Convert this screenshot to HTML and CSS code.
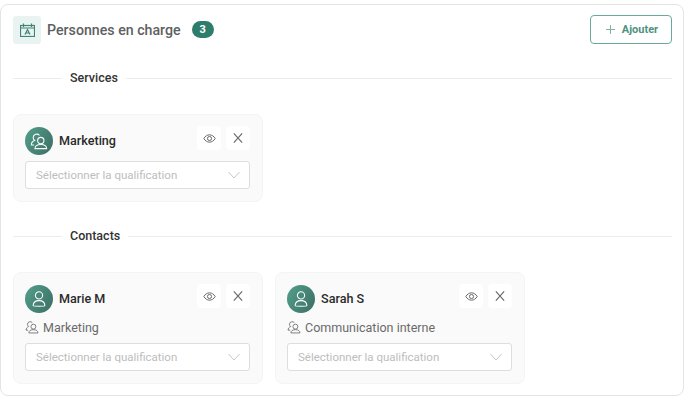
FILE: index.html
```html
<!DOCTYPE html>
<html lang="fr">
<head>
<meta charset="UTF-8">
<meta name="viewport" content="width=device-width, initial-scale=1.0">
<title>Personnes en charge</title>
<link rel="stylesheet" href="styles.css">
</head>
<body>

<svg class="sprites" width="0" height="0" aria-hidden="true">
  <symbol id="i-eye" viewBox="0 0 16 16">
    <path d="M1 8C2.800 5 5.200 3.500 8 3.500S13.200 5 15 8C13.200 11 10.800 12.500 8 12.500S2.800 11 1 8Z"/>
    <circle cx="8" cy="8" r="2.500"/>
  </symbol>
  <symbol id="i-close" viewBox="0 0 13 13">
    <path d="M2 1.500 11 11.500M11 1.500 2 11.500"/>
  </symbol>
  <symbol id="i-chevron" viewBox="0 0 12 12">
    <path d="M0.500 3 6 9 11.500 3"/>
  </symbol>
  <symbol id="i-user" viewBox="0 0 20 20">
    <circle cx="10" cy="6" r="4"/>
    <path d="M3.500 17.500C3.500 13.500 6 11.800 10 11.800S16.500 13.500 16.500 17.500C16.500 18 3.500 18 3.500 17.500Z"/>
  </symbol>
  <symbol id="i-group" viewBox="0 0 20 20">
    <circle cx="12" cy="9.500" r="3.500"/>
    <path d="M5.500 18.500C5.500 15.500 8 13.800 12 13.800S18.500 15.500 18.500 18.500Z"/>
    <path d="M10.500 3.800A4 4 0 0 0 3.500 6C3.500 7.500 4.200 8.600 5.300 9.300C3 10.200 1.500 12 1.500 14.500H4.500"/>
  </symbol>
</svg>

<div class="panel">
  <div class="panel-head">
    <span class="head-icon">
      <svg width="15" height="14" viewBox="0 0 15 14">
        <rect x="0.500" y="2.500" width="14" height="11"/>
        <path d="M3.500 0.500V4M11.500 0.500V4M0.500 5H14.500"/>
        <path d="M5 11.500 7.500 6.500 10 11.500M6 10H9"/>
      </svg>
    </span>
    <h1>Personnes en charge</h1>
    <span class="badge">3</span>
    <button class="add-btn" type="button">
      <svg width="9" height="9" viewBox="0 0 9 9"><path d="M4.500 0V9M0 4.500H9"/></svg>
      Ajouter
    </button>
  </div>

  <div class="section-title"><span>Services</span></div>
  <div class="cards">
    <div class="card">
      <div class="card-top">
        <span class="avatar"><svg width="18" height="18"><use href="#i-group"/></svg></span>
        <span class="name">Marketing</span>
        <span class="icon-btn eye"><svg width="13" height="13"><use href="#i-eye"/></svg></span>
        <span class="icon-btn close"><svg width="12" height="12"><use href="#i-close"/></svg></span>
      </div>
      <div class="select">Sélectionner la qualification<svg width="12" height="12"><use href="#i-chevron"/></svg></div>
    </div>
  </div>

  <div class="section-title"><span>Contacts</span></div>
  <div class="cards">
    <div class="card">
      <div class="card-top">
        <span class="avatar"><svg width="18" height="18"><use href="#i-user"/></svg></span>
        <span class="name">Marie M</span>
        <span class="icon-btn eye"><svg width="13" height="13"><use href="#i-eye"/></svg></span>
        <span class="icon-btn close"><svg width="12" height="12"><use href="#i-close"/></svg></span>
      </div>
      <div class="service"><svg width="14" height="14"><use href="#i-group"/></svg>Marketing</div>
      <div class="select">Sélectionner la qualification<svg width="12" height="12"><use href="#i-chevron"/></svg></div>
    </div>
    <div class="card">
      <div class="card-top">
        <span class="avatar"><svg width="18" height="18"><use href="#i-user"/></svg></span>
        <span class="name">Sarah S</span>
        <span class="icon-btn eye"><svg width="13" height="13"><use href="#i-eye"/></svg></span>
        <span class="icon-btn close"><svg width="12" height="12"><use href="#i-close"/></svg></span>
      </div>
      <div class="service"><svg width="14" height="14"><use href="#i-group"/></svg>Communication interne</div>
      <div class="select">Sélectionner la qualification<svg width="12" height="12"><use href="#i-chevron"/></svg></div>
    </div>
  </div>
</div>

</body>
</html>
```

FILE: styles.css
```css
* {
  box-sizing: border-box;
  font-family: 'Roboto', sans-serif;
}

body {
  margin: 0;
  background: #fff;
}

.sprites {
  position: absolute;
}

svg {
  fill: none;
  stroke: currentColor;
  stroke-width: 1.2;
  flex-shrink: 0;
}

.panel {
  width: 684px;
  height: 392px;
  margin: 4px 0 0 0;
  padding: 10px 11px 0 12px;
  background: #fff;
  border: 1px solid #e4e4e4;
  border-radius: 8px;
}

.panel-head {
  display: flex;
  align-items: center;
  height: 29px;
}

.head-icon {
  width: 28px;
  height: 28px;
  display: flex;
  align-items: center;
  justify-content: center;
  background: #e9f3f1;
  border-radius: 3px;
  color: #3f8474;
}

h1 {
  margin: 0 0 0 6px;
  font-size: 14.2px;
  font-weight: 500;
  color: #5f5f5f;
}

.badge {
  margin-left: 11px;
  width: 22px;
  height: 17px;
  border-radius: 9px;
  background: #2e7c6b;
  color: #fff;
  font-size: 11px;
  font-weight: 700;
  line-height: 17px;
  text-align: center;
}

.add-btn {
  margin-left: auto;
  width: 82px;
  height: 29px;
  padding: 0 0 0 2px;
  display: flex;
  align-items: center;
  justify-content: center;
  gap: 7px;
  background: #fff;
  border: 1px solid #6aaa9d;
  border-radius: 4px;
  color: #4f9182;
  font-size: 11px;
  font-weight: 700;
}

.add-btn svg {
  stroke: #7db5a9;
  stroke-width: 1;
}

.section-title {
  display: flex;
  align-items: center;
  height: 16px;
  margin-top: 26px;
  font-size: 12.5px;
  font-weight: 500;
  color: #333;
}

.section-title::before {
  content: "";
  width: 49px;
  border-top: 1px solid #ececec;
}

.section-title::after {
  content: "";
  flex: 1;
  border-top: 1px solid #ececec;
}

.section-title span {
  padding: 0 8px 2px;
}

.cards {
  display: flex;
  gap: 12px;
  margin-top: 28px;
}

.card {
  width: 250px;
  padding: 12px;
  background: #fafafa;
  border: 1px solid #f4f4f4;
  border-radius: 8px;
}

.card-top {
  display: flex;
  align-items: center;
  height: 29px;
  margin: -1px 0 0 -1px;
}

.avatar {
  width: 28px;
  height: 28px;
  display: flex;
  align-items: center;
  justify-content: center;
  border-radius: 50%;
  background: linear-gradient(120deg, #52a08b, #3d6d64);
  color: #fff;
}

.name {
  margin-left: 6px;
  padding-bottom: 1px;
  font-size: 12.6px;
  font-weight: 500;
  color: #2a2a2a;
  flex: 1;
}

.icon-btn {
  width: 24px;
  height: 24px;
  margin-top: -5px;
  display: flex;
  align-items: center;
  justify-content: center;
  background: #fff;
  border-radius: 4px;
  color: #666;
}

.close {
  margin-left: 5px;
}

.service {
  display: flex;
  align-items: center;
  gap: 4px;
  height: 22px;
  margin: 3px 0 5px -1px;
  font-size: 12.5px;
  color: #6a6a6a;
}

.select {
  display: flex;
  align-items: center;
  justify-content: space-between;
  width: 225px;
  height: 28px;
  margin: 6px 0 0 -1px;
  padding: 0 9px 0 10px;
  background: #fff;
  border: 1px solid #dedede;
  border-radius: 3px;
  font-size: 11.5px;
  color: #bdbdbd;
}

.select svg {
  stroke: #c6c6c6;
  stroke-width: 1;
}

.service + .select {
  margin-top: 0;
}
```
